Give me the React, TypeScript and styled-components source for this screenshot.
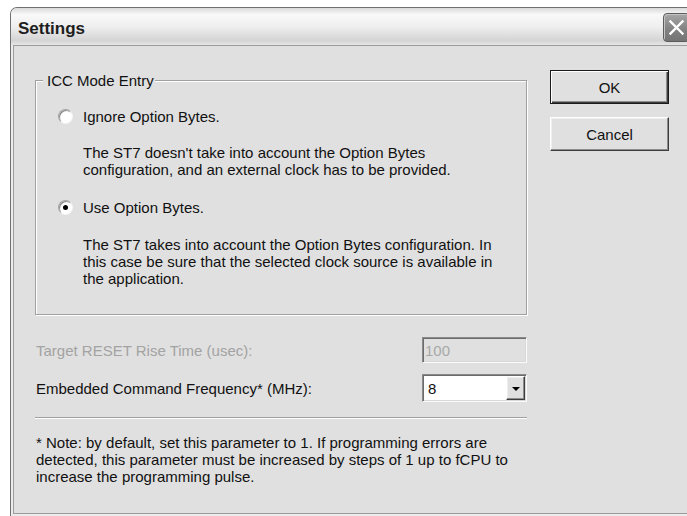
import React from 'react';
import styled, { createGlobalStyle, css } from 'styled-components';

const GlobalStyle = createGlobalStyle`
  html, body {
    margin: 0;
    padding: 0;
    background: #ffffff;
    overflow: hidden;
  }
  body {
    font-family: "Liberation Sans", Arial, sans-serif;
    font-size: 15px;
    color: #111;
  }
`;

// classic 3D edges
const sunken = css`
  border: 1px solid;
  border-color: #8a8a8a #fbfbfb #fbfbfb #8a8a8a;
  box-shadow: inset 1px 1px 0 #6c6c6c, inset -1px -1px 0 #d8d8d8;
`;

const raised = css`
  border: 1px solid;
  border-color: #ffffff #3e3e3e #3e3e3e #ffffff;
  box-shadow: inset -1px -1px 0 #8c8c8c, inset 1px 1px 0 #eeeeee;
`;

const Window = styled.div`
  box-sizing: border-box;
  margin: 7px 0 0 10px;
  width: 700px;
  height: 509px;
  display: flex;
  flex-direction: column;
  border: 1px solid #707070;
  border-bottom: none;
  border-radius: 7px 7px 0 0;
  background: #ececec;
  overflow: hidden;
`;

const TitleBar = styled.div`
  flex: none;
  height: 37px;
  display: flex;
  align-items: flex-start;
  justify-content: space-between;
  padding-left: 7px;
  background: linear-gradient(
    to bottom,
    #dadada 0%,
    #f9f9f9 18%,
    #efefef 50%,
    #d4d4d4 88%,
    #e6e6e6 100%
  );
`;

const Title = styled.span`
  margin-top: 11px;
  font-size: 17px;
  line-height: 20px;
  font-weight: bold;
  color: #1e1e1e;
`;

const CloseButton = styled.button`
  box-sizing: border-box;
  margin: 5px 19px 0 0;
  width: 27px;
  height: 29px;
  padding: 0;
  display: flex;
  align-items: center;
  justify-content: center;
  border: 1px solid #5c5c5c;
  border-radius: 4px;
  background: linear-gradient(to bottom, #a6a6a6, #808080 60%, #747474);
  box-shadow: inset 1px 1px 0 #c4c4c4;
`;

const Client = styled.div`
  flex: 1;
  margin: 0 2px 2px;
  border: 1px solid #9c9c9c;
  background: #e0e0e0;
  display: flex;
  align-items: flex-start;
  gap: 23px;
  padding: 24px 0 0 21px;
`;

const MainColumn = styled.div`
  width: 492px;
  flex: none;
  display: flex;
  flex-direction: column;
`;

const GroupBox = styled.fieldset`
  margin: 2px 0 0;
  padding: 19px 0 27px;
  min-width: 0;
  border: 1px solid #a0a0a0;
  box-shadow: inset 1px 1px 0 #fff, 1px 1px 0 #fff;
`;

const GroupLabel = styled.legend`
  margin-left: 7px;
  padding: 0 1px 0 4px;
  line-height: 17px;
  background: #e0e0e0;
`;

const GroupBody = styled.div`
  display: flex;
  flex-direction: column;
  padding-left: 22px;
`;

const OptionRow = styled.label<{ $gap?: number }>`
  display: flex;
  align-items: center;
  gap: 10px;
  height: 17px;
  line-height: 17px;
  margin-top: ${p => p.$gap ?? 0}px;
`;

const Radio = styled.span<{ $checked?: boolean }>`
  box-sizing: border-box;
  flex: none;
  position: relative;
  width: 15px;
  height: 15px;
  border-radius: 50%;
  border: 1px solid;
  border-color: #a4a4a4 #f4f4f4 #f4f4f4 #a4a4a4;
  background: radial-gradient(circle at 62% 62%, #ffffff 45%, #eeeeee 100%);
  box-shadow: inset 1px 1px 0 #8a8a8a;

  &::after {
    content: '';
    display: ${p => (p.$checked ? 'block' : 'none')};
    position: absolute;
    left: 4px;
    top: 4px;
    width: 5px;
    height: 5px;
    border-radius: 50%;
    background: #000;
  }
`;

const Description = styled.p<{ $gap: number }>`
  margin: ${p => p.$gap}px 0 0 25px;
  line-height: 17px;
`;

const FieldRow = styled.div<{ $gap: number }>`
  display: flex;
  align-items: center;
  justify-content: space-between;
  margin-top: ${p => p.$gap}px;
`;

const FieldLabel = styled.span<{ $disabled?: boolean }>`
  padding-left: 1px;
  line-height: 17px;
  color: ${p => (p.$disabled ? '#a3a3a3' : '#111')};
`;

const TextBox = styled.div`
  box-sizing: border-box;
  width: 105px;
  height: 26px;
  padding-left: 2px;
  display: flex;
  align-items: center;
  ${sunken};
  background: #e0e0e0;
  color: #a8a8a8;
`;

const Combo = styled.div`
  box-sizing: border-box;
  width: 105px;
  height: 28px;
  padding: 1px 1px 1px 5px;
  display: flex;
  align-items: center;
  justify-content: space-between;
  ${sunken};
  background: #fff;
`;

const ComboArrow = styled.span`
  box-sizing: border-box;
  width: 19px;
  height: 24px;
  display: flex;
  align-items: center;
  justify-content: center;
  ${raised};
  background: #e0e0e0;

  &::before {
    content: '';
    border-left: 4px solid transparent;
    border-right: 4px solid transparent;
    border-top: 4px solid #000;
    margin-top: 1px;
  }
`;

const Separator = styled.hr`
  margin: 15px 0 0;
  height: 0;
  border: none;
  border-top: 1px solid #a0a0a0;
  border-bottom: 1px solid #fff;
`;

const Note = styled.p`
  margin: 15px 0 0 1px;
  line-height: 17px;
`;

const ButtonColumn = styled.div`
  display: flex;
  flex-direction: column;
  gap: 13px;
`;

const DialogButton = styled.button<{ $default?: boolean }>`
  box-sizing: border-box;
  width: 119px;
  height: 34px;
  padding: 0;
  font-family: inherit;
  font-size: 15px;
  color: #111;
  background: #e0e0e0;
  ${p =>
    p.$default
      ? css`
          border: 1px solid #1a1a1a;
          box-shadow: inset 1px 1px 0 #fff, inset -1px -1px 0 #3e3e3e,
            inset -2px -2px 0 #8c8c8c;
        `
      : raised};
`;

const App: React.FC = () => {
  return (
    <>
      <GlobalStyle />
      <Window>
        <TitleBar>
          <Title>Settings</Title>
          <CloseButton aria-label="Close">
            <svg width="17" height="17" viewBox="0 0 17 17">
              <path d="M2.5 2.5 L14.5 14.5 M14.5 2.5 L2.5 14.5" stroke="#fff" strokeWidth="2.4" strokeLinecap="square" />
            </svg>
          </CloseButton>
        </TitleBar>
        <Client>
          <MainColumn>
            <GroupBox>
              <GroupLabel>ICC Mode Entry</GroupLabel>
              <GroupBody>
                <OptionRow>
                  <Radio />
                  Ignore Option Bytes.
                </OptionRow>
                <Description $gap={19}>
                  The ST7 doesn't take into account the Option Bytes
                  <br />
                  configuration, and an external clock has to be provided.
                </Description>
                <OptionRow $gap={21}>
                  <Radio $checked />
                  Use Option Bytes.
                </OptionRow>
                <Description $gap={20}>
                  The ST7 takes into account the Option Bytes configuration. In
                  <br />
                  this case be sure that the selected clock source is available in
                  <br />
                  the application.
                </Description>
              </GroupBody>
            </GroupBox>

            <FieldRow $gap={22}>
              <FieldLabel $disabled>Target RESET Rise Time (usec):</FieldLabel>
              <TextBox>100</TextBox>
            </FieldRow>
            <FieldRow $gap={11}>
              <FieldLabel>Embedded Command Frequency* (MHz):</FieldLabel>
              <Combo>
                <span>8</span>
                <ComboArrow />
              </Combo>
            </FieldRow>

            <Separator />
            <Note>
              * Note: by default, set this parameter to 1. If programming errors are
              <br />
              detected, this parameter must be increased by steps of 1 up to fCPU to
              <br />
              increase the programming pulse.
            </Note>
          </MainColumn>

          <ButtonColumn>
            <DialogButton $default>OK</DialogButton>
            <DialogButton>Cancel</DialogButton>
          </ButtonColumn>
        </Client>
      </Window>
    </>
  );
};

export default App;
